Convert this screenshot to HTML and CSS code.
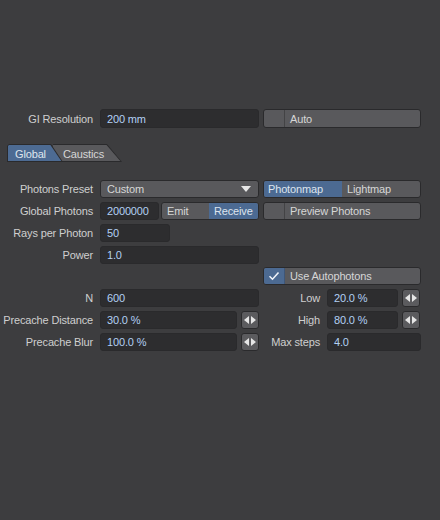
FILE: index.html
```html
<!DOCTYPE html>
<html>
<head>
<meta charset="utf-8">
<link rel="stylesheet" href="styles.css">
</head>
<body>
<div class="panel">
  <div class="row gi">
    <div class="label">GI Resolution</div>
    <div class="field w-left">200 mm</div>
    <div class="btn check w-right"><span class="box"></span><span class="txt">Auto</span></div>
  </div>

  <div class="tabs">
    <div class="tab tab-global"><span class="tab-in">Global</span></div>
    <div class="tab tab-caustics"><span class="tab-in">Caustics</span></div>
  </div>

  <div class="rows">
    <div class="row">
      <div class="label">Photons Preset</div>
      <div class="btn select w-left"><span>Custom</span>
        <svg class="tri" width="10" height="6" viewBox="0 0 10 6"><path d="M0 0H10L5 6Z" fill="#e6e6e6"/></svg>
      </div>
      <div class="seg w-right">
        <div class="seg-item on">Photonmap</div>
        <div class="seg-item">Lightmap</div>
      </div>
    </div>

    <div class="row">
      <div class="label">Global Photons</div>
      <div class="field w-photons">2000000</div>
      <div class="seg w-emit">
        <div class="seg-item emit">Emit</div>
        <div class="seg-item on">Receive</div>
      </div>
      <div class="btn check w-right"><span class="box"></span><span class="txt">Preview Photons</span></div>
    </div>

    <div class="row">
      <div class="label">Rays per Photon</div>
      <div class="field w-rays">50</div>
    </div>

    <div class="row">
      <div class="label">Power</div>
      <div class="field w-left">1.0</div>
    </div>

    <div class="row auto-row">
      <div class="label"></div>
      <div class="spacer w-left"></div>
      <div class="btn check w-right"><span class="box on">
        <svg width="12" height="10" viewBox="0 0 12 10"><path d="M1.5 5.2L4.5 8.2L10.5 1.5" fill="none" stroke="#eef2f8" stroke-width="1.6"/></svg>
      </span><span class="txt">Use Autophotons</span></div>
    </div>

    <div class="row">
      <div class="label">N</div>
      <div class="field w-left">600</div>
      <div class="sub">
        <div class="sublabel">Low</div>
        <div class="field w-sub">20.0 %</div>
        <div class="spin"><svg width="12" height="8" viewBox="0 0 12 8"><path d="M5 0V8L0 4Z M7 0V8L12 4Z" fill="#e6e6e6"/></svg></div>
      </div>
    </div>

    <div class="row">
      <div class="label">Precache Distance</div>
      <div class="field w-pre">30.0 %</div>
      <div class="spin"><svg width="12" height="8" viewBox="0 0 12 8"><path d="M5 0V8L0 4Z M7 0V8L12 4Z" fill="#e6e6e6"/></svg></div>
      <div class="sub">
        <div class="sublabel">High</div>
        <div class="field w-sub">80.0 %</div>
        <div class="spin"><svg width="12" height="8" viewBox="0 0 12 8"><path d="M5 0V8L0 4Z M7 0V8L12 4Z" fill="#e6e6e6"/></svg></div>
      </div>
    </div>

    <div class="row">
      <div class="label">Precache Blur</div>
      <div class="field w-pre">100.0 %</div>
      <div class="spin"><svg width="12" height="8" viewBox="0 0 12 8"><path d="M5 0V8L0 4Z M7 0V8L12 4Z" fill="#e6e6e6"/></svg></div>
      <div class="sub">
        <div class="sublabel">Max steps</div>
        <div class="field w-max">4.0</div>
      </div>
    </div>
  </div>
</div>
</body>
</html>
```

FILE: styles.css
```css
html, body {
  margin: 0;
  padding: 0;
  background: #3d3d3f;
}
body {
  width: 440px;
  height: 520px;
  font-family: "Liberation Sans", Arial, sans-serif;
  font-size: 11px;
  letter-spacing: -0.15px;
  color: #cfcfcf;
}
.panel {
  padding-top: 109px;
}
.row {
  display: flex;
  align-items: center;
  height: 18px;
}
.row.gi {
  height: 19px;
}
.rows {
  display: flex;
  flex-direction: column;
  gap: 4px;
  margin-top: 18px;
}
.rows .auto-row {
  margin-top: -1px;
}
.label {
  width: 93px;
  margin-right: 7px;
  text-align: right;
  white-space: nowrap;
  flex: none;
}
.field, .btn, .seg, .spin {
  box-sizing: border-box;
  height: 100%;
  border: 1px solid #2a2a2c;
  border-radius: 3px;
  flex: none;
  display: flex;
  align-items: center;
  white-space: nowrap;
}
.field {
  background: #2d2d2f;
  color: #b3d0f4;
  padding-left: 6px;
}
.btn {
  background: #59595c;
  color: #d6d6d6;
}
.w-left { width: 159px; }
.w-right { width: 158px; margin-left: 4px; }
.spacer { height: 100%; }
.w-photons { width: 59px; }
.w-emit { width: 98px; margin-left: 2px; }
.w-rays { width: 70px; }
.w-pre { width: 137px; }
.w-sub { width: 71px; }
.w-max { width: 94px; }

.btn.check {
  padding: 0;
  overflow: hidden;
}
.btn.check .box {
  width: 20px;
  height: 100%;
  border-right: 1px solid #434345;
  display: flex;
  align-items: center;
  justify-content: center;
  flex: none;
}
.btn.check .box.on {
  background: #4c6a92;
  border-right-color: #3e5678;
}
.btn.check .txt {
  padding-left: 5px;
}

.btn.select {
  padding: 0 7px 0 6px;
  justify-content: space-between;
}
.tri { display: block; }

.seg {
  overflow: hidden;
  background: #59595c;
}
.seg-item {
  box-sizing: border-box;
  height: 100%;
  flex: 1;
  display: flex;
  align-items: center;
  padding-left: 5px;
  color: #d6d6d6;
}
.seg-item.on {
  background: #4c6a92;
  color: #dde4ee;
}
.w-right.seg .seg-item:first-child { flex: none; width: 78px; padding-left: 4px; }
.seg-item.emit { flex: none; width: 47px; }

.spin {
  width: 18px;
  margin-left: 4px;
  background: #5b5b5e;
  justify-content: center;
}
.spin svg { display: block; }

.sub {
  display: flex;
  align-items: center;
  height: 100%;
  margin-left: 4px;
}
.sublabel {
  width: 57px;
  margin-right: 7px;
  text-align: right;
  white-space: nowrap;
}

.tabs {
  display: flex;
  margin-top: 16px;
  padding-left: 7px;
  height: 18px;
}
.tab {
  position: relative;
  height: 18px;
  background: #2a2a2c;
}
.tab-in {
  display: flex;
  align-items: center;
  height: 100%;
  box-sizing: border-box;
}
.tab-global {
  width: 56px;
  z-index: 2;
  clip-path: polygon(2px 0, 44px 0, 56px 18px, 0 18px, 0 2px);
}
.tab-global .tab-in {
  background: #4d6b93;
  color: #dfe5ee;
  padding-left: 8px;
  padding-top: 1px;
  clip-path: polygon(2px 1px, 43.4px 1px, 54.3px 17px, 1px 17px, 1px 2px);
}
.tab-caustics {
  width: 69px;
  margin-left: -10px;
  z-index: 1;
  clip-path: polygon(0 0, 54px 0, 69px 18px, 0 18px);
}
.tab-caustics .tab-in {
  background: #59595c;
  color: #d6d6d6;
  padding-left: 10px;
  padding-top: 1px;
  clip-path: polygon(0 1px, 53.5px 1px, 67.3px 17px, 0 17px);
}
```
